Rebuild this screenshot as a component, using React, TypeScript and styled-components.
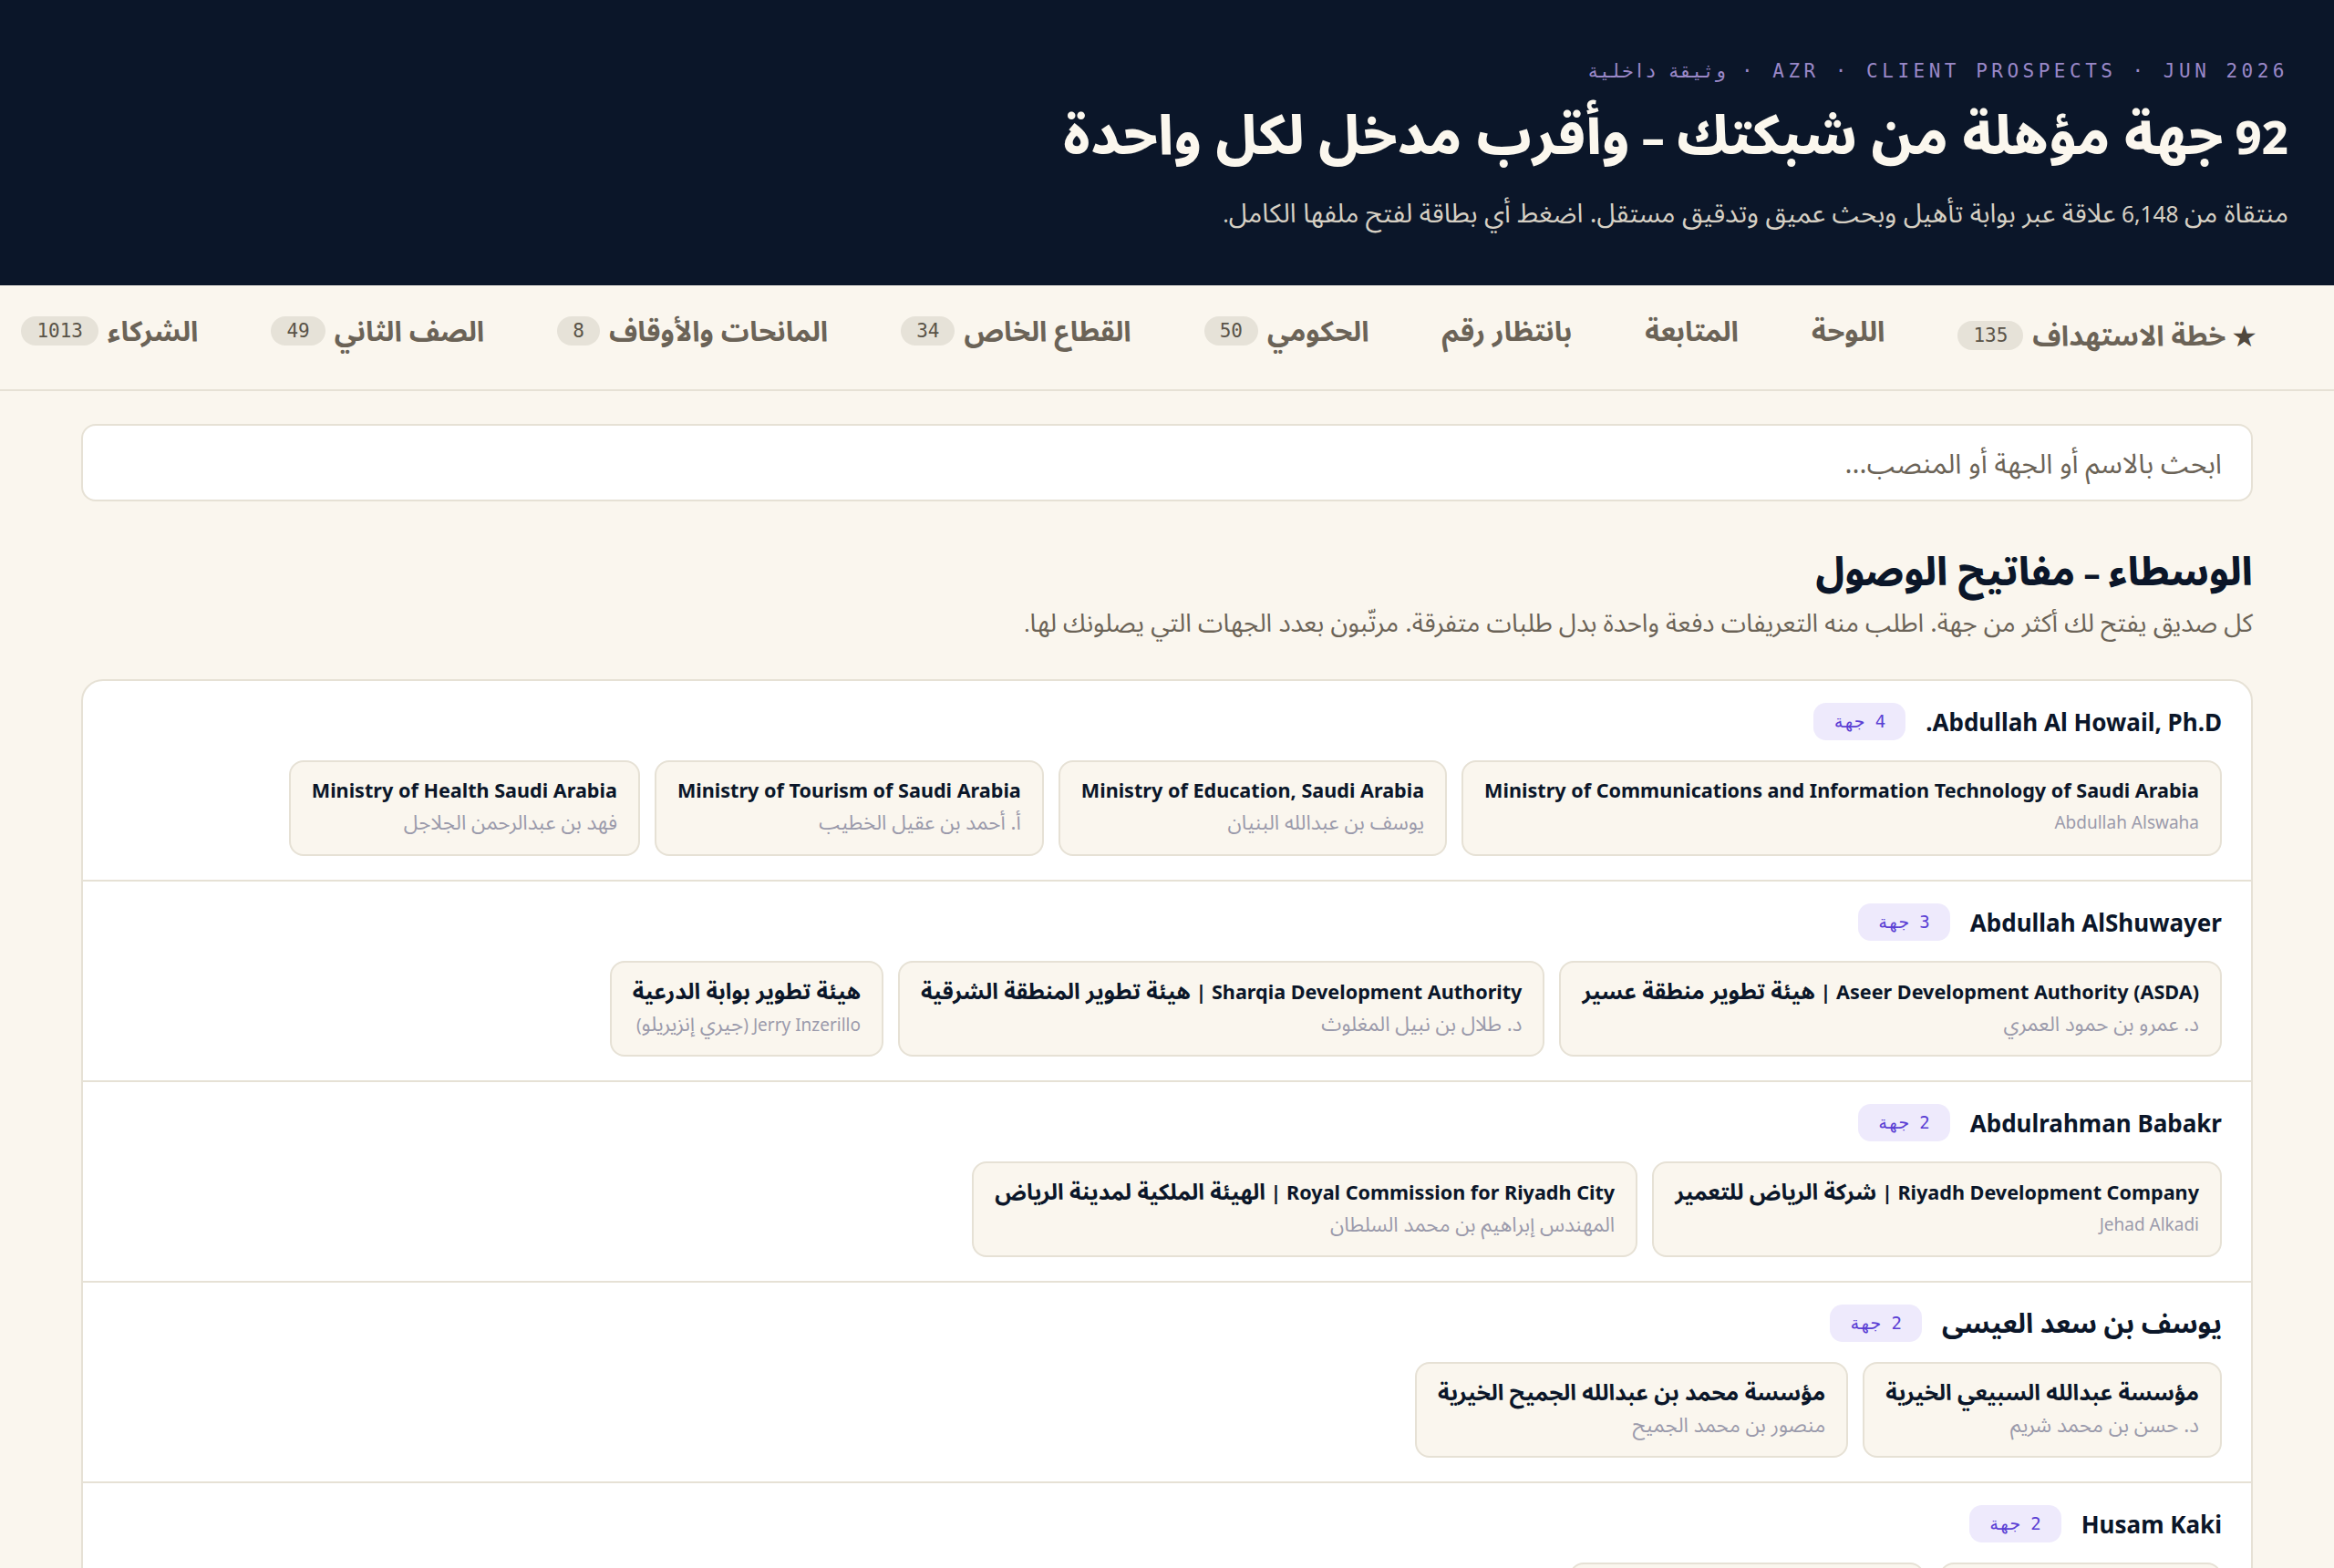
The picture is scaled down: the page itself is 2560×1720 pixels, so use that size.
import { FC, ReactNode } from 'react'
import styled, { createGlobalStyle } from 'styled-components'

const SANS = `"Noto Sans", "Noto Sans Arabic", "DejaVu Sans", sans-serif`
const MONO = `"DejaVu Sans Mono", "Liberation Mono", monospace`

// arabic runs come out narrower than latin in the fallback face, so they get bumped up a bit
const AR_RUN =
  /([\u0600-\u06FF\u0750-\u077F]+(?:[\s.،]+[\u0600-\u06FF\u0750-\u077F]+)*)/g

const mixed = (text: string): ReactNode[] =>
  text
    .split(AR_RUN)
    .map((part, i) => (i % 2 === 1 ? <Ar key={i}>{part}</Ar> : part))

interface ITab {
  label: string
  count?: number
  starred?: boolean
}

interface IEntity {
  title: string
  contact: string
}

interface IBroker {
  name: string
  reach: number
  entities: IEntity[]
}

const tabs: ITab[] = [
  { label: 'خطة الاستهداف', count: 135, starred: true },
  { label: 'اللوحة' },
  { label: 'المتابعة' },
  { label: 'بانتظار رقم' },
  { label: 'الحكومي', count: 50 },
  { label: 'القطاع الخاص', count: 34 },
  { label: 'المانحات والأوقاف', count: 8 },
  { label: 'الصف الثاني', count: 49 },
  { label: 'الشركاء', count: 1013 },
]

const brokers: IBroker[] = [
  {
    name: 'Abdullah Al Howail, Ph.D.',
    reach: 4,
    entities: [
      {
        title:
          'Ministry of Communications and Information Technology of Saudi Arabia',
        contact: 'Abdullah Alswaha',
      },
      {
        title: 'Ministry of Education, Saudi Arabia',
        contact: 'يوسف بن عبدالله البنيان',
      },
      {
        title: 'Ministry of Tourism of Saudi Arabia',
        contact: 'أ. أحمد بن عقيل الخطيب',
      },
      {
        title: 'Ministry of Health Saudi Arabia',
        contact: 'فهد بن عبدالرحمن الجلاجل',
      },
    ],
  },
  {
    name: 'Abdullah AlShuwayer',
    reach: 3,
    entities: [
      {
        title: 'Aseer Development Authority (ASDA) | هيئة تطوير منطقة عسير',
        contact: 'د. عمرو بن حمود العمري',
      },
      {
        title: 'Sharqia Development Authority | هيئة تطوير المنطقة الشرقية',
        contact: 'د. طلال بن نبيل المغلوث',
      },
      {
        title: 'هيئة تطوير بوابة الدرعية',
        contact: 'Jerry Inzerillo (جيري إنزيريلو)',
      },
    ],
  },
  {
    name: 'Abdulrahman Babakr',
    reach: 2,
    entities: [
      {
        title: 'Riyadh Development Company | شركة الرياض للتعمير',
        contact: 'Jehad Alkadi',
      },
      {
        title: 'Royal Commission for Riyadh City | الهيئة الملكية لمدينة الرياض',
        contact: 'المهندس إبراهيم بن محمد السلطان',
      },
    ],
  },
  {
    name: 'يوسف بن سعد العيسى',
    reach: 2,
    entities: [
      {
        title: 'مؤسسة عبدالله السبيعي الخيرية',
        contact: 'د. حسن بن محمد شريم',
      },
      {
        title: 'مؤسسة محمد بن عبدالله الجميح الخيرية',
        contact: 'منصور بن محمد الجميح',
      },
    ],
  },
  {
    name: 'Husam Kaki',
    reach: 2,
    entities: [
      { title: 'Saudi Tourism Authority', contact: 'Fahd Hamidaddin' },
      { title: 'Ministry of Investment of Saudi', contact: 'Khalid Al-Falih' },
    ],
  },
]

const App: FC = () => {
  return (
    <>
      <GlobalStyle />
      <Page dir="rtl">
        <Hero>
          <Eyebrow>AZR · CLIENT PROSPECTS · JUN 2026 · وثيقة داخلية</Eyebrow>
          <HeroTitle>
            {mixed('92 جهة مؤهلة من شبكتك – وأقرب مدخل لكل واحدة')}
          </HeroTitle>
          <HeroLede>
            {mixed(
              'منتقاة من 6,148 علاقة عبر بوابة تأهيل وبحث عميق وتدقيق مستقل. اضغط أي بطاقة لفتح ملفها الكامل.'
            )}
          </HeroLede>
        </Hero>

        <TabBar>
          {tabs.map((tab) => (
            <Tab key={tab.label} $starred={tab.starred}>
              {tab.starred && <TabStar>★</TabStar>}
              <span>{mixed(tab.label)}</span>
              {tab.count !== undefined && <TabCount>{tab.count}</TabCount>}
            </Tab>
          ))}
        </TabBar>

        <Main>
          <SearchInput placeholder="ابحث بالاسم أو الجهة أو المنصب..." />

          <SectionTitle>{mixed('الوسطاء – مفاتيح الوصول')}</SectionTitle>
          <SectionNote>
            {mixed(
              'كل صديق يفتح لك أكثر من جهة. اطلب منه التعريفات دفعة واحدة بدل طلبات متفرقة. مرتّبون بعدد الجهات التي يصلونك لها.'
            )}
          </SectionNote>

          <BrokerList>
            {brokers.map((broker) => (
              <BrokerRow key={broker.name}>
                <BrokerHead>
                  <BrokerName>{mixed(broker.name)}</BrokerName>
                  <Reach>{broker.reach} جهة</Reach>
                </BrokerHead>
                <EntityWrap>
                  {broker.entities.map((entity) => (
                    <Entity key={entity.title}>
                      <EntityTitle>{mixed(entity.title)}</EntityTitle>
                      <EntityContact>{mixed(entity.contact)}</EntityContact>
                    </Entity>
                  ))}
                </EntityWrap>
              </BrokerRow>
            ))}
          </BrokerList>
        </Main>
      </Page>
    </>
  )
}

export default App

const GlobalStyle = createGlobalStyle`
  * {
    box-sizing: border-box;
  }
  body {
    margin: 0;
    background: #faf6ee;
    font-family: ${SANS};
    color: #0b1629;
  }
`
const Ar = styled.span`
  font-size: 1.18em;
`
const Page = styled.div`
  min-height: 100vh;
  background: #faf6ee;
`
const Hero = styled.header`
  background: #0b1629;
  padding: 64px 50px 58px;
  display: flex;
  flex-direction: column;
`
const Eyebrow = styled.div`
  font-family: ${MONO};
  font-size: 21px;
  line-height: 28px;
  letter-spacing: 4.5px;
  color: #9a88c8;
`
const HeroTitle = styled.h1`
  margin: 16px 0 0;
  font-size: 50.5px;
  line-height: 76px;
  font-weight: 800;
  color: #fbf7ee;
`
const HeroLede = styled.p`
  margin: 25px 0 0;
  font-size: 24.5px;
  line-height: 40px;
  color: #d6d0c4;
`
const TabBar = styled.nav`
  display: flex;
  align-items: flex-start;
  padding: 0 44px;
  border-bottom: 2px solid #e6e1d5;
  overflow-x: auto;
  scrollbar-width: none;
  &::-webkit-scrollbar {
    display: none;
  }
`
const Tab = styled.div<{ $starred?: boolean }>`
  flex: 0 0 auto;
  display: flex;
  align-items: center;
  gap: 10px;
  padding: ${(p) => (p.$starred ? '36px 40px 40px' : '31px 40px 45px')};
  font-size: 26px;
  line-height: 36px;
  font-weight: 700;
  color: #6b6357;
  white-space: nowrap;
`
const TabStar = styled.span`
  font-size: 32px;
  margin-left: -4px;
  color: #4f483e;
`
const TabCount = styled.span`
  font-family: ${MONO};
  font-size: 21px;
  line-height: 32px;
  font-weight: 400;
  padding: 0 17px;
  border-radius: 16px;
  background: #e6e2d8;
  color: #5a5448;
`
const Main = styled.main`
  padding: 36px 89px 80px;
  display: flex;
  flex-direction: column;
`
const SearchInput = styled.input`
  height: 85px;
  width: 100%;
  padding: 0 32px;
  border: 2px solid #e6e1d5;
  border-radius: 16px;
  background: #fff;
  font-family: ${SANS};
  font-size: 30px;
  color: #0b1629;
  outline: none;
  &::placeholder {
    color: #6b6357;
  }
`
const SectionTitle = styled.h2`
  margin: 50px 0 0;
  font-size: 36px;
  line-height: 52px;
  font-weight: 800;
  color: #0b1629;
`
const SectionNote = styled.p`
  margin: 8px 0 0;
  font-size: 23.5px;
  line-height: 38px;
  color: #6b6357;
`
const BrokerList = styled.section`
  margin-top: 42px;
  background: #fff;
  border: 2px solid #e6e1d5;
  border-radius: 24px;
  overflow: hidden;
`
const BrokerRow = styled.div`
  padding: 24px 32px 26px;
  border-bottom: 2px solid #e6e1d5;
  &:last-child {
    border-bottom: none;
  }
`
const BrokerHead = styled.div`
  display: flex;
  align-items: center;
  gap: 22px;
  height: 41px;
`
const BrokerName = styled.div`
  font-size: 26px;
  line-height: 34px;
  font-weight: 700;
  color: #0b1629;
  ${Ar} {
    font-size: 1.15em;
  }
`
const Reach = styled.span`
  font-family: ${MONO};
  font-size: 19px;
  line-height: 41px;
  padding: 0 22px;
  border-radius: 14px;
  background: #eeeafc;
  color: #5b3fd4;
`
const EntityWrap = styled.div`
  margin-top: 22px;
  display: flex;
  flex-wrap: wrap;
  gap: 16px;
`
const Entity = styled.div`
  display: flex;
  flex-direction: column;
  align-items: flex-start;
  gap: 6px;
  height: 105px;
  padding: 16px 23px 0;
  background: #faf6ee;
  border: 2px solid #e6e1d5;
  border-radius: 16px;
`
const EntityTitle = styled.div`
  font-size: 21.6px;
  line-height: 30px;
  font-weight: 700;
  color: #0b1629;
  white-space: nowrap;
  ${Ar} {
    font-size: 1.13em;
  }
`
const EntityContact = styled.div`
  font-size: 19px;
  line-height: 28px;
  color: #9a9aab;
  white-space: nowrap;
`
